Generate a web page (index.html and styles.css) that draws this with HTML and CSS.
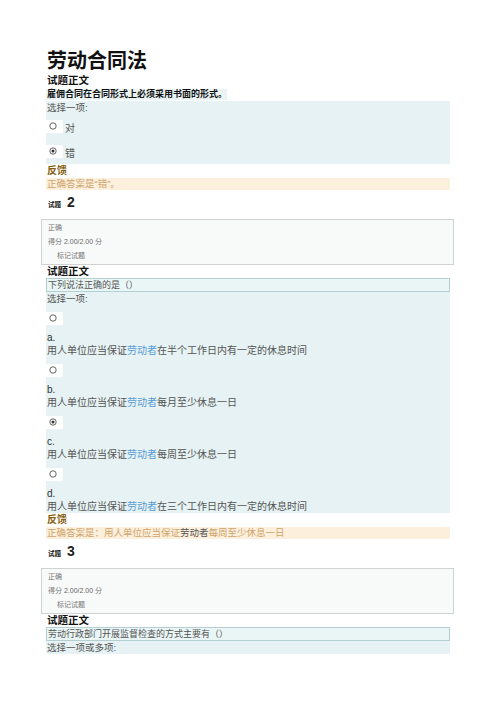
FILE: index.html
```html
<!DOCTYPE html>
<html lang="zh">
<head>
<meta charset="utf-8">
<title>劳动合同法</title>
<link rel="stylesheet" href="styles.css">
</head>
<body>
<div class="page">
  <h1 class="title">劳动合同法</h1>
  <div class="qlabel">试题正文</div>
  <div class="q1text"><span>雇佣合同在合同形式上必须采用书面的形式。</span></div>
  <div class="answer answer-tf">
    <div class="prompt">选择一项:</div>
    <div class="tf-row">
      <span class="radio"><svg width="8" height="8" viewBox="0 0 8 8"><circle cx="4" cy="4" r="3.2" fill="#fff" stroke="#555" stroke-width="0.9"/></svg></span>
      <span class="tf-label">对</span>
    </div>
    <div class="tf-row tf-row2">
      <span class="radio"><svg width="8" height="8" viewBox="0 0 8 8"><circle cx="4" cy="4" r="3.2" fill="#fff" stroke="#555" stroke-width="0.9"/><circle cx="4" cy="4" r="1.5" fill="#333"/></svg></span>
      <span class="tf-label">错</span>
    </div>
  </div>
  <div class="fb-title">反馈</div>
  <div class="fb-band">正确答案是“错”。</div>

  <div class="qhead"><span class="qhead-small">试题</span><span class="qhead-num">2</span></div>
  <div class="info">
    <div class="info-line">正确</div>
    <div class="info-line">得分 <span class="num">2.00/2.00</span> 分</div>
    <div class="info-line info-flag">标记试题</div>
  </div>
  <div class="qlabel">试题正文</div>
  <div class="answer">
    <div class="qbox">下列说法正确的是（）</div>
    <div class="prompt">选择一项:</div>
    <div class="opt">
      <div class="radio-row"><span class="radio"><svg width="8" height="8" viewBox="0 0 8 8"><circle cx="4" cy="4" r="3.2" fill="#fff" stroke="#555" stroke-width="0.9"/></svg></span></div>
      <div class="letter">a.</div>
      <div class="otext">用人单位应当保证<span class="link">劳动者</span>在半个工作日内有一定的休息时间</div>
    </div>
    <div class="opt">
      <div class="radio-row"><span class="radio"><svg width="8" height="8" viewBox="0 0 8 8"><circle cx="4" cy="4" r="3.2" fill="#fff" stroke="#555" stroke-width="0.9"/></svg></span></div>
      <div class="letter">b.</div>
      <div class="otext">用人单位应当保证<span class="link">劳动者</span>每月至少休息一日</div>
    </div>
    <div class="opt">
      <div class="radio-row"><span class="radio"><svg width="8" height="8" viewBox="0 0 8 8"><circle cx="4" cy="4" r="3.2" fill="#fff" stroke="#555" stroke-width="0.9"/><circle cx="4" cy="4" r="1.5" fill="#333"/></svg></span></div>
      <div class="letter">c.</div>
      <div class="otext">用人单位应当保证<span class="link">劳动者</span>每周至少休息一日</div>
    </div>
    <div class="opt">
      <div class="radio-row"><span class="radio"><svg width="8" height="8" viewBox="0 0 8 8"><circle cx="4" cy="4" r="3.2" fill="#fff" stroke="#555" stroke-width="0.9"/></svg></span></div>
      <div class="letter">d.</div>
      <div class="otext">用人单位应当保证<span class="link">劳动者</span>在三个工作日内有一定的休息时间</div>
    </div>
  </div>
  <div class="fb-title">反馈</div>
  <div class="fb-band">正确答案是：用人单位应当保证<span class="fb-dark">劳动者</span>每周至少休息一日</div>

  <div class="qhead"><span class="qhead-small">试题</span><span class="qhead-num">3</span></div>
  <div class="info">
    <div class="info-line">正确</div>
    <div class="info-line">得分 <span class="num">2.00/2.00</span> 分</div>
    <div class="info-line info-flag">标记试题</div>
  </div>
  <div class="qlabel">试题正文</div>
  <div class="answer">
    <div class="qbox">劳动行政部门开展监督检查的方式主要有（）</div>
    <div class="prompt">选择一项或多项:</div>
  </div>
</div>
</body>
</html>
```

FILE: styles.css
```css
html, body {
  margin: 0;
  padding: 0;
  background: #fff;
}

body {
  font-family: "Liberation Sans", "Noto Sans CJK SC", sans-serif;
  color: #444;
}

.page {
  width: 404px;
  padding: 49px 46px 0 46px;
}

.title {
  margin: 0;
  font-size: 20px;
  line-height: 25px;
  font-weight: bold;
  color: #111;
  padding-left: 1px;
}

.qlabel {
  font-size: 10.5px;
  line-height: 13px;
  font-weight: bold;
  color: #111;
  padding-left: 1px;
}

.q1text {
  height: 14px;
  display: flex;
  align-items: center;
}

.q1text span {
  font-size: 9px;
  line-height: 11px;
  font-weight: bold;
  color: #111;
  background: #eaf4f5;
  padding-left: 1px;
}

.answer {
  background: #e6f2f3;
}

.answer-tf {
  padding-bottom: 4px;
}

.prompt {
  font-size: 9.5px;
  line-height: 13px;
  color: #555;
  padding-left: 1px;
}

.tf-row {
  display: flex;
  align-items: flex-end;
  height: 18px;
  margin-top: 3px;
}

.tf-row2 {
  margin-top: 7px;
}

.radio {
  width: 17px;
  height: 13px;
  background: #fff;
  display: flex;
  align-items: center;
  padding-left: 3px;
  box-sizing: border-box;
  align-self: center;
}

.radio svg {
  display: block;
}

.tf-label {
  margin-left: 2px;
  font-size: 10px;
  line-height: 13px;
  color: #555;
}

.opt {
  padding-top: 4px;
}

.radio-row {
  height: 18px;
  display: flex;
  align-items: center;
}

.letter {
  margin-top: 4px;
  font-size: 10px;
  line-height: 13px;
  color: #333;
  padding-left: 1px;
}

.otext {
  font-size: 10px;
  line-height: 13px;
  color: #555;
  padding-left: 1px;
  white-space: nowrap;
}

.link {
  color: #5a9bd4;
}

.fb-title {
  font-size: 10px;
  line-height: 14px;
  font-weight: bold;
  color: #86600f;
  padding-left: 1px;
}

.fb-band {
  height: 12px;
  line-height: 12px;
  background: #fcefdc;
  font-size: 9.5px;
  color: #d0a46c;
  padding-left: 1px;
  white-space: nowrap;
}

.fb-dark {
  color: #555;
}

.qhead {
  margin-top: 4px;
  height: 18px;
  display: flex;
  align-items: baseline;
  padding-left: 2px;
}

.qhead-small {
  font-size: 6.5px;
  font-weight: bold;
  color: #111;
}

.qhead-num {
  margin-left: 6px;
  font-size: 14px;
  font-weight: bold;
  color: #222;
}

.info {
  margin: 7px -4px 0 -5px;
  border: 1px solid #cfd2d3;
  background: #f8f9f9;
  padding: 1px 6px;
}

.info-line {
  font-size: 7px;
  line-height: 14px;
  color: #777;
}

.num {
  color: #666;
}

.info-flag {
  padding-left: 9px;
}

.qbox {
  border: 1px solid #b4cfd1;
  background: #eaf5f6;
  height: 12px;
  font-size: 9px;
  line-height: 12px;
  color: #555;
  padding-left: 1px;
}
```
